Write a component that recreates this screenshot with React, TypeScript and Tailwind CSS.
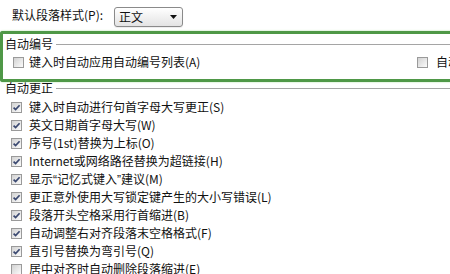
// Word 选项 - 自动套用格式 面板片段
import type { ReactNode } from "react";

// 半角引号 (参考图中引号占半个字宽)
const Quote = ({ children }: { children: ReactNode }) => (
    <span className="font-['Liberation_Sans',sans-serif]">{children}</span>
);

const correctRows: { key: string; label: ReactNode; checked: boolean }[] = [
    { key: "S", label: "键入时自动进行句首字母大写更正(S)", checked: true },
    { key: "W", label: "英文日期首字母大写(W)", checked: true },
    { key: "O", label: "序号(1st)替换为上标(O)", checked: true },
    { key: "H", label: "Internet或网络路径替换为超链接(H)", checked: true },
    {
        key: "M",
        label: (
            <>
                显示<Quote>“</Quote>记忆式键入<Quote>”</Quote>建议(M)
            </>
        ),
        checked: true,
    },
    { key: "L", label: "更正意外使用大写锁定键产生的大小写错误(L)", checked: true },
    { key: "B", label: "段落开头空格采用行首缩进(B)", checked: true },
    { key: "F", label: "自动调整右对齐段落末空格格式(F)", checked: true },
    { key: "Q", label: "直引号替换为弯引号(Q)", checked: true },
    { key: "E", label: "居中对齐时自动删除段落缩进(E)", checked: false },
];

// 复选框
function CheckBox({ checked }: { checked: boolean }) {
    return (
        <span className="flex h-[11px] w-[11px] shrink-0 items-center justify-center border border-[#9a9a9a] bg-linear-to-br from-[#d2d2d2] to-[#fbfbfb]">
            {checked && (
                <svg viewBox="0 0 9 9" className="h-[9px] w-[9px]">
                    <path d="M1.6 4.6 L3.6 6.6 L7.6 2.2" fill="none" stroke="#3a4870" strokeWidth="1.7" />
                </svg>
            )}
        </span>
    );
}

// 分组标题 + 横线
function GroupTitle({ text }: { text: string }) {
    return (
        <div className="flex h-[12px] items-center gap-[3px]">
            <span className="shrink-0">{text}</span>
            <div className="h-px flex-1 bg-[#a5a5a5]" />
        </div>
    );
}

export default function App() {
    return (
        <div className="h-[274px] w-[450px] overflow-hidden bg-white font-['Noto_Sans_CJK_SC',sans-serif] text-[12px] leading-[12px] text-[#111]">
            {/* 默认段落样式 */}
            <div className="flex h-[31px] items-start pl-[12px] pt-[7px]">
                <span className="mt-[2px] w-[102px] shrink-0">默认段落样式(P):</span>
                <div className="flex h-[20px] w-[69px] items-center justify-between rounded-[3px] border border-[#8a8a8a] bg-linear-to-b from-[#ffffff] to-[#e3e3e3] pl-[4px] pr-[5px] shadow-[0_1px_1px_rgba(0,0,0,0.08)]">
                    <span>正文</span>
                    <svg viewBox="0 0 7 4" className="h-[4px] w-[7px]">
                        <path d="M0 0 H7 L3.5 4 Z" fill="#111" />
                    </svg>
                </div>
            </div>

            {/* 自动编号 (绿色高亮框) */}
            <div className="box-border h-[51px] w-[470px] rounded-l-[3px] border-[3px] border-r-0 border-[#4f9847] pl-[2px] pt-[4px] shadow-[0_0_2px_#a6dca0]">
                <GroupTitle text="自动编号" />
                <div className="mt-[3px] grid h-[18px] grid-cols-[404px_1fr] items-center pl-[8px]">
                    <label className="flex items-center gap-[5px]">
                        <CheckBox checked={false} />
                        <span>键入时自动应用自动编号列表(A)</span>
                    </label>
                    <label className="flex items-center gap-[8px] whitespace-nowrap">
                        <CheckBox checked={false} />
                        <span>自动项目符号列表(L)</span>
                    </label>
                </div>
            </div>

            {/* 自动更正 */}
            <div className="pl-[5px]">
                <GroupTitle text="自动更正" />
            </div>
            <div className="mt-[4px]">
                {correctRows.map((row) => (
                    <label key={row.key} className="flex h-[18px] items-center gap-[7px] whitespace-nowrap pl-[11px]">
                        <CheckBox checked={row.checked} />
                        <span>{row.label}</span>
                    </label>
                ))}
            </div>
        </div>
    );
}
